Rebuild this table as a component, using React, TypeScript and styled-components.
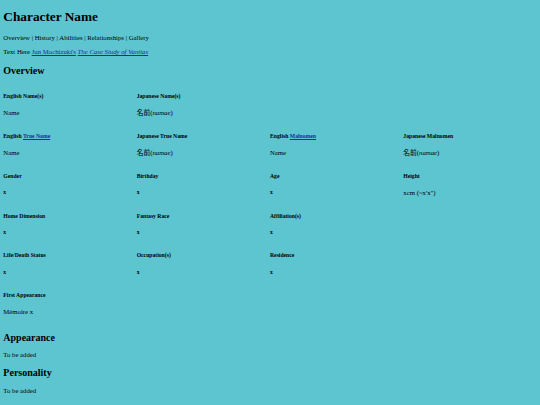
import React from "react";
import styled, { createGlobalStyle } from "styled-components";

const Global = createGlobalStyle`
  html, body { margin: 0; padding: 0; }
  body {
    background: #5dc5d0;
    color: #000;
    font-family: "Liberation Serif", "Noto Sans CJK JP", serif;
  }
`;

const Page = styled.div`
  display: flex;
  flex-direction: column;
  padding: 0 3.33px;
`;

const Title = styled.h1`
  font-size: 13.3px;
  line-height: 15.3px;
  font-weight: 700;
  margin: 8.9px 0 0;
`;

const Para = styled.p<{ $top: number }>`
  font-size: 6.75px;
  line-height: 7.66px;
  margin: ${(p) => p.$top}px 0 0;
`;

const Link = styled.a<{ $italic?: boolean }>`
  color: #12309a;
  text-decoration: underline;
  font-style: ${(p) => (p.$italic ? "italic" : "normal")};
`;

const Section = styled.h2<{ $top: number }>`
  font-size: 10px;
  line-height: 11.5px;
  font-weight: 700;
  margin: ${(p) => p.$top}px 0 0;
`;

const InfoGrid = styled.div`
  display: grid;
  grid-template-columns: repeat(4, 1fr);
  grid-auto-rows: 23.4px;
  row-gap: 16.3px;
  margin-top: 17.1px;
`;

const Cell = styled.div`
  display: flex;
  flex-direction: column;
`;

const Label = styled.h6`
  font-size: 5.7px;
  line-height: 6px;
  font-weight: 700;
  margin: 0;
  white-space: nowrap;
`;

const Value = styled.p<{ $small?: boolean }>`
  margin: ${(p) => (p.$small ? "10.5px" : "9.7px")} 0 0;
  font-size: ${(p) => (p.$small ? "5.7px" : "6.75px")};
  font-weight: ${(p) => (p.$small ? 700 : 400)};
  line-height: ${(p) => (p.$small ? "6px" : "7.66px")};
  white-space: nowrap;
`;

const Empty = styled.div``;

type Item = { label: React.ReactNode; value: React.ReactNode; small?: boolean } | null;

const jp = (
  <>
    名前(<i>namae</i>)
  </>
);

const items: Item[] = [
  { label: "English Name(s)", value: "Name" },
  { label: "Japanese Name(s)", value: jp },
  null,
  null,
  { label: <>English <Link href="#">True Name</Link></>, value: "Name" },
  { label: "Japanese True Name", value: jp },
  { label: <>English <Link href="#">Malnomen</Link></>, value: "Name" },
  { label: "Japanese Malnomen", value: jp },
  { label: "Gender", value: "x", small: true },
  { label: "Birthday", value: "x", small: true },
  { label: "Age", value: "x", small: true },
  { label: "Height", value: "xcm (~x'x\")" },
  { label: "Home Dimension", value: "x", small: true },
  { label: "Fantasy Race", value: "x", small: true },
  { label: "Affiliation(s)", value: "x", small: true },
  null,
  { label: "Life/Death Status", value: "x", small: true },
  { label: "Occupation(s)", value: "x", small: true },
  { label: "Residence", value: "x", small: true },
  null,
  { label: "First Appearance", value: "Mémoire x" },
];

export default function App() {
  return (
    <>
      <Global />
      <Page>
        <Title>Character Name</Title>
        <Para $top={9.4}>Overview | History | Abilities | Relationships | Gallery</Para>
        <Para $top={7.2}>
          Text Here <Link href="#">Jun Mochizuki's</Link>{" "}
          <Link href="#" $italic>The Case Study of Vanitas</Link>
        </Para>
        <Section $top={8.8}>Overview</Section>
        <InfoGrid>
          {items.map((it, i) =>
            it ? (
              <Cell key={i}>
                <Label>{it.label}</Label>
                <Value $small={it.small}>{it.value}</Value>
              </Cell>
            ) : (
              <Empty key={i} />
            )
          )}
        </InfoGrid>
        <Section $top={16.6}>Appearance</Section>
        <Para $top={7.5}>To be added</Para>
        <Section $top={8.6}>Personality</Section>
        <Para $top={8.5}>To be added</Para>
        <Section $top={9.8}>Mannerisms</Section>
      </Page>
    </>
  );
}
